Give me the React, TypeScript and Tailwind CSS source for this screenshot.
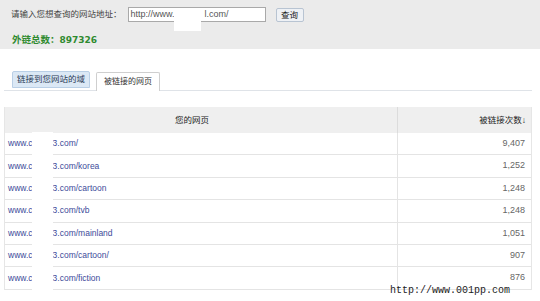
import React from 'react';

const rows = [
  { path: '3.com/', count: '9,407' },
  { path: '3.com/korea', count: '1,252' },
  { path: '3.com/cartoon', count: '1,248' },
  { path: '3.com/tvb', count: '1,248' },
  { path: '3.com/mainland', count: '1,051' },
  { path: '3.com/cartoon/', count: '907' },
  { path: '3.com/fiction', count: '876' },
];

const sans = { fontFamily: '"Liberation Sans", "Noto Sans CJK SC", sans-serif' };

const App: React.FC = () => {
  return (
    <div className="relative w-[540px] h-[301px] overflow-hidden bg-white text-[#333]" style={sans}>
      {/* search bar */}
      <div className="relative h-[49px] bg-[#ebebeb] pl-[11px] pt-[7px]">
        <div className="flex items-start">
          <span className="mt-[2px] text-[8.5px] leading-[11px] text-[#444]">请输入您想查询的网站地址：</span>
          <div className="ml-[6px] flex h-[15px] w-[138px] items-center border border-[#a9a9a9] bg-white pl-[2px] text-[9px] text-[#555]">
            <span>http://www.</span>
            <span className="ml-[30px]">l.com/</span>
          </div>
          <button className="ml-[10px] mt-[1px] h-[14px] w-[28px] rounded-[2px] border border-[#b8c4d2] bg-[#eef1f5] text-[8.5px] leading-[12px] text-[#222]">
            查询
          </button>
        </div>
        <div className="mt-[11px] flex items-baseline pl-[1px] font-bold text-[#2f8a2f]">
          <span className="text-[9.5px]">外链总数：</span>
          <span className="text-[9px]" style={{ fontFamily: '"DejaVu Sans", sans-serif' }}>897326</span>
        </div>
        <div className="absolute left-[174px] top-[14px] h-[17px] w-[27px] bg-white" />
      </div>

      {/* tabs */}
      <div className="ml-[4px] mr-[8px] mt-[22px] flex items-end border-b border-[#dfe3e8] pl-[8px]">
        <div className="mb-[2px] flex h-[17px] w-[78px] items-center justify-center rounded-t-[2px] border border-[#b9cfe6] bg-[#dbe8f5] text-[8.5px] text-[#2a3a55]">
          链接到您网站的域
        </div>
        <div className="-mb-px ml-[6px] flex h-[19px] w-[64px] items-center justify-center rounded-t-[2px] border border-b-0 border-[#cfcfcf] bg-white text-[8px] text-[#333]">
          被链接的网页
        </div>
      </div>

      {/* table */}
      <div className="relative ml-[4px] mt-[16px] w-[528px] border-x border-[#e6e6e6]">
        <div className="flex h-[26px] items-center bg-[#efefef] text-[8.5px] text-[#222]">
          <div className="flex h-full w-[393px] items-center justify-center border-r border-[#dcdcdc] pr-[18px]">您的网页</div>
          <div className="flex flex-1 items-center justify-end pr-[5px]">被链接次数↓</div>
        </div>
        {rows.map((r) => (
          <div key={r.path} className="flex h-[22.4px] items-center border-b border-[#e4e4e4] text-[8.5px]">
            <div className="flex h-full w-[393px] items-center border-r border-[#e4e4e4] pl-[3px] text-[#3d4b9a]">
              <span>www.c</span>
              <span className="ml-[20px]">{r.path}</span>
            </div>
            <div className="flex h-full flex-1 items-center justify-end pr-[6px] text-[9px] text-[#666]">{r.count}</div>
          </div>
        ))}
        <div className="absolute left-[27px] top-[25px] bottom-[-2px] w-[21px] bg-white" />
      </div>

      <div
        className="absolute left-[390px] top-[284px] text-[10px] leading-[14px] text-[#222]"
        style={{ fontFamily: '"Liberation Mono", monospace' }}
      >
        http://www.001pp.com
      </div>
    </div>
  );
};

export default App;
